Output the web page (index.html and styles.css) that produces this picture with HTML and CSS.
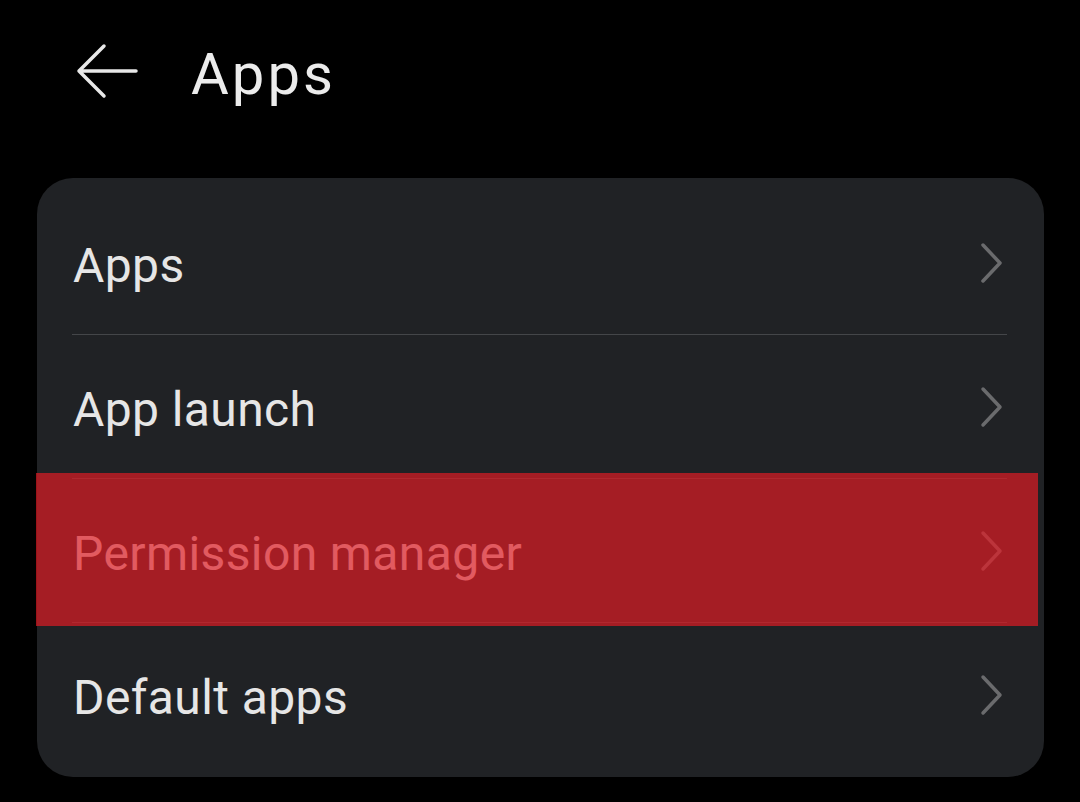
FILE: index.html
```html
<!DOCTYPE html>
<html lang="en">
<head>
<meta charset="utf-8">
<title>Apps</title>
<link rel="stylesheet" href="styles.css">
</head>
<body>
<header class="topbar">
  <svg class="back" width="62" height="56" viewBox="0 0 62 56" aria-hidden="true">
    <path d="M28 3 L3 28 L28 53 M3 28 L60 28" fill="none" stroke="#e8e8e8" stroke-width="3.5" stroke-linecap="round" stroke-linejoin="round"/>
  </svg>
  <h1 class="title">Apps</h1>
</header>
<main class="card">
  <div class="row"><span class="label">Apps</span><svg class="chev" width="24" height="42" viewBox="0 0 24 42"><path d="M3 3 L20 21 L3 39" fill="none" stroke="#6a6b6d" stroke-width="3.5" stroke-linecap="round" stroke-linejoin="round"/></svg></div>
  <div class="divider"></div>
  <div class="row"><span class="label">App launch</span><svg class="chev" width="24" height="42" viewBox="0 0 24 42"><path d="M3 3 L20 21 L3 39" fill="none" stroke="#6a6b6d" stroke-width="3.5" stroke-linecap="round" stroke-linejoin="round"/></svg></div>
  <div class="divider"></div>
  <div class="row row-highlight"><span class="label">Permission manager</span><svg class="chev" width="24" height="42" viewBox="0 0 24 42"><path d="M3 3 L20 21 L3 39" fill="none" stroke="#6a6b6d" stroke-width="3.5" stroke-linecap="round" stroke-linejoin="round"/></svg><div class="highlight"></div></div>
  <div class="divider"></div>
  <div class="row"><span class="label">Default apps</span><svg class="chev" width="24" height="42" viewBox="0 0 24 42"><path d="M3 3 L20 21 L3 39" fill="none" stroke="#6a6b6d" stroke-width="3.5" stroke-linecap="round" stroke-linejoin="round"/></svg></div>
</main>
</body>
</html>
```
FILE: styles.css
```css
html, body {
  margin: 0;
  padding: 0;
  background: #000;
}
body {
  font-family: Roboto, "Noto Sans", "Liberation Sans", sans-serif;
  color: #e8e8e8;
  width: 1080px;
  height: 802px;
  overflow: hidden;
}
.topbar {
  height: 148px;
  display: flex;
  align-items: center;
  padding-left: 76px;
  gap: 53px;
}
.back {
  display: block;
  margin-top: -6px;
}
.title {
  margin: 0;
  font-size: 58px;
  font-weight: 400;
  letter-spacing: 3px;
  color: #ececec;
  line-height: 1;
}
.card {
  margin: 30px 36px 0 37px;
  background: #202225;
  border-radius: 36px;
  padding: 13px 0 11px;
}
.row {
  height: 143px;
  display: flex;
  align-items: center;
  justify-content: space-between;
  padding: 0 40px 0 36px;
}
.label {
  font-size: 48px;
  color: #e6e6e6;
  letter-spacing: 0.4px;
  padding-top: 5px;
}
.chev {
  display: block;
}
.divider {
  height: 1px;
  background: #444649;
  margin: 0 37px 0 35px;
}
.row-highlight {
  position: relative;
}
.highlight {
  position: absolute;
  top: -6px;
  bottom: -4px;
  left: -1px;
  right: 6px;
  background: rgba(225, 27, 36, 0.69);
}
```
